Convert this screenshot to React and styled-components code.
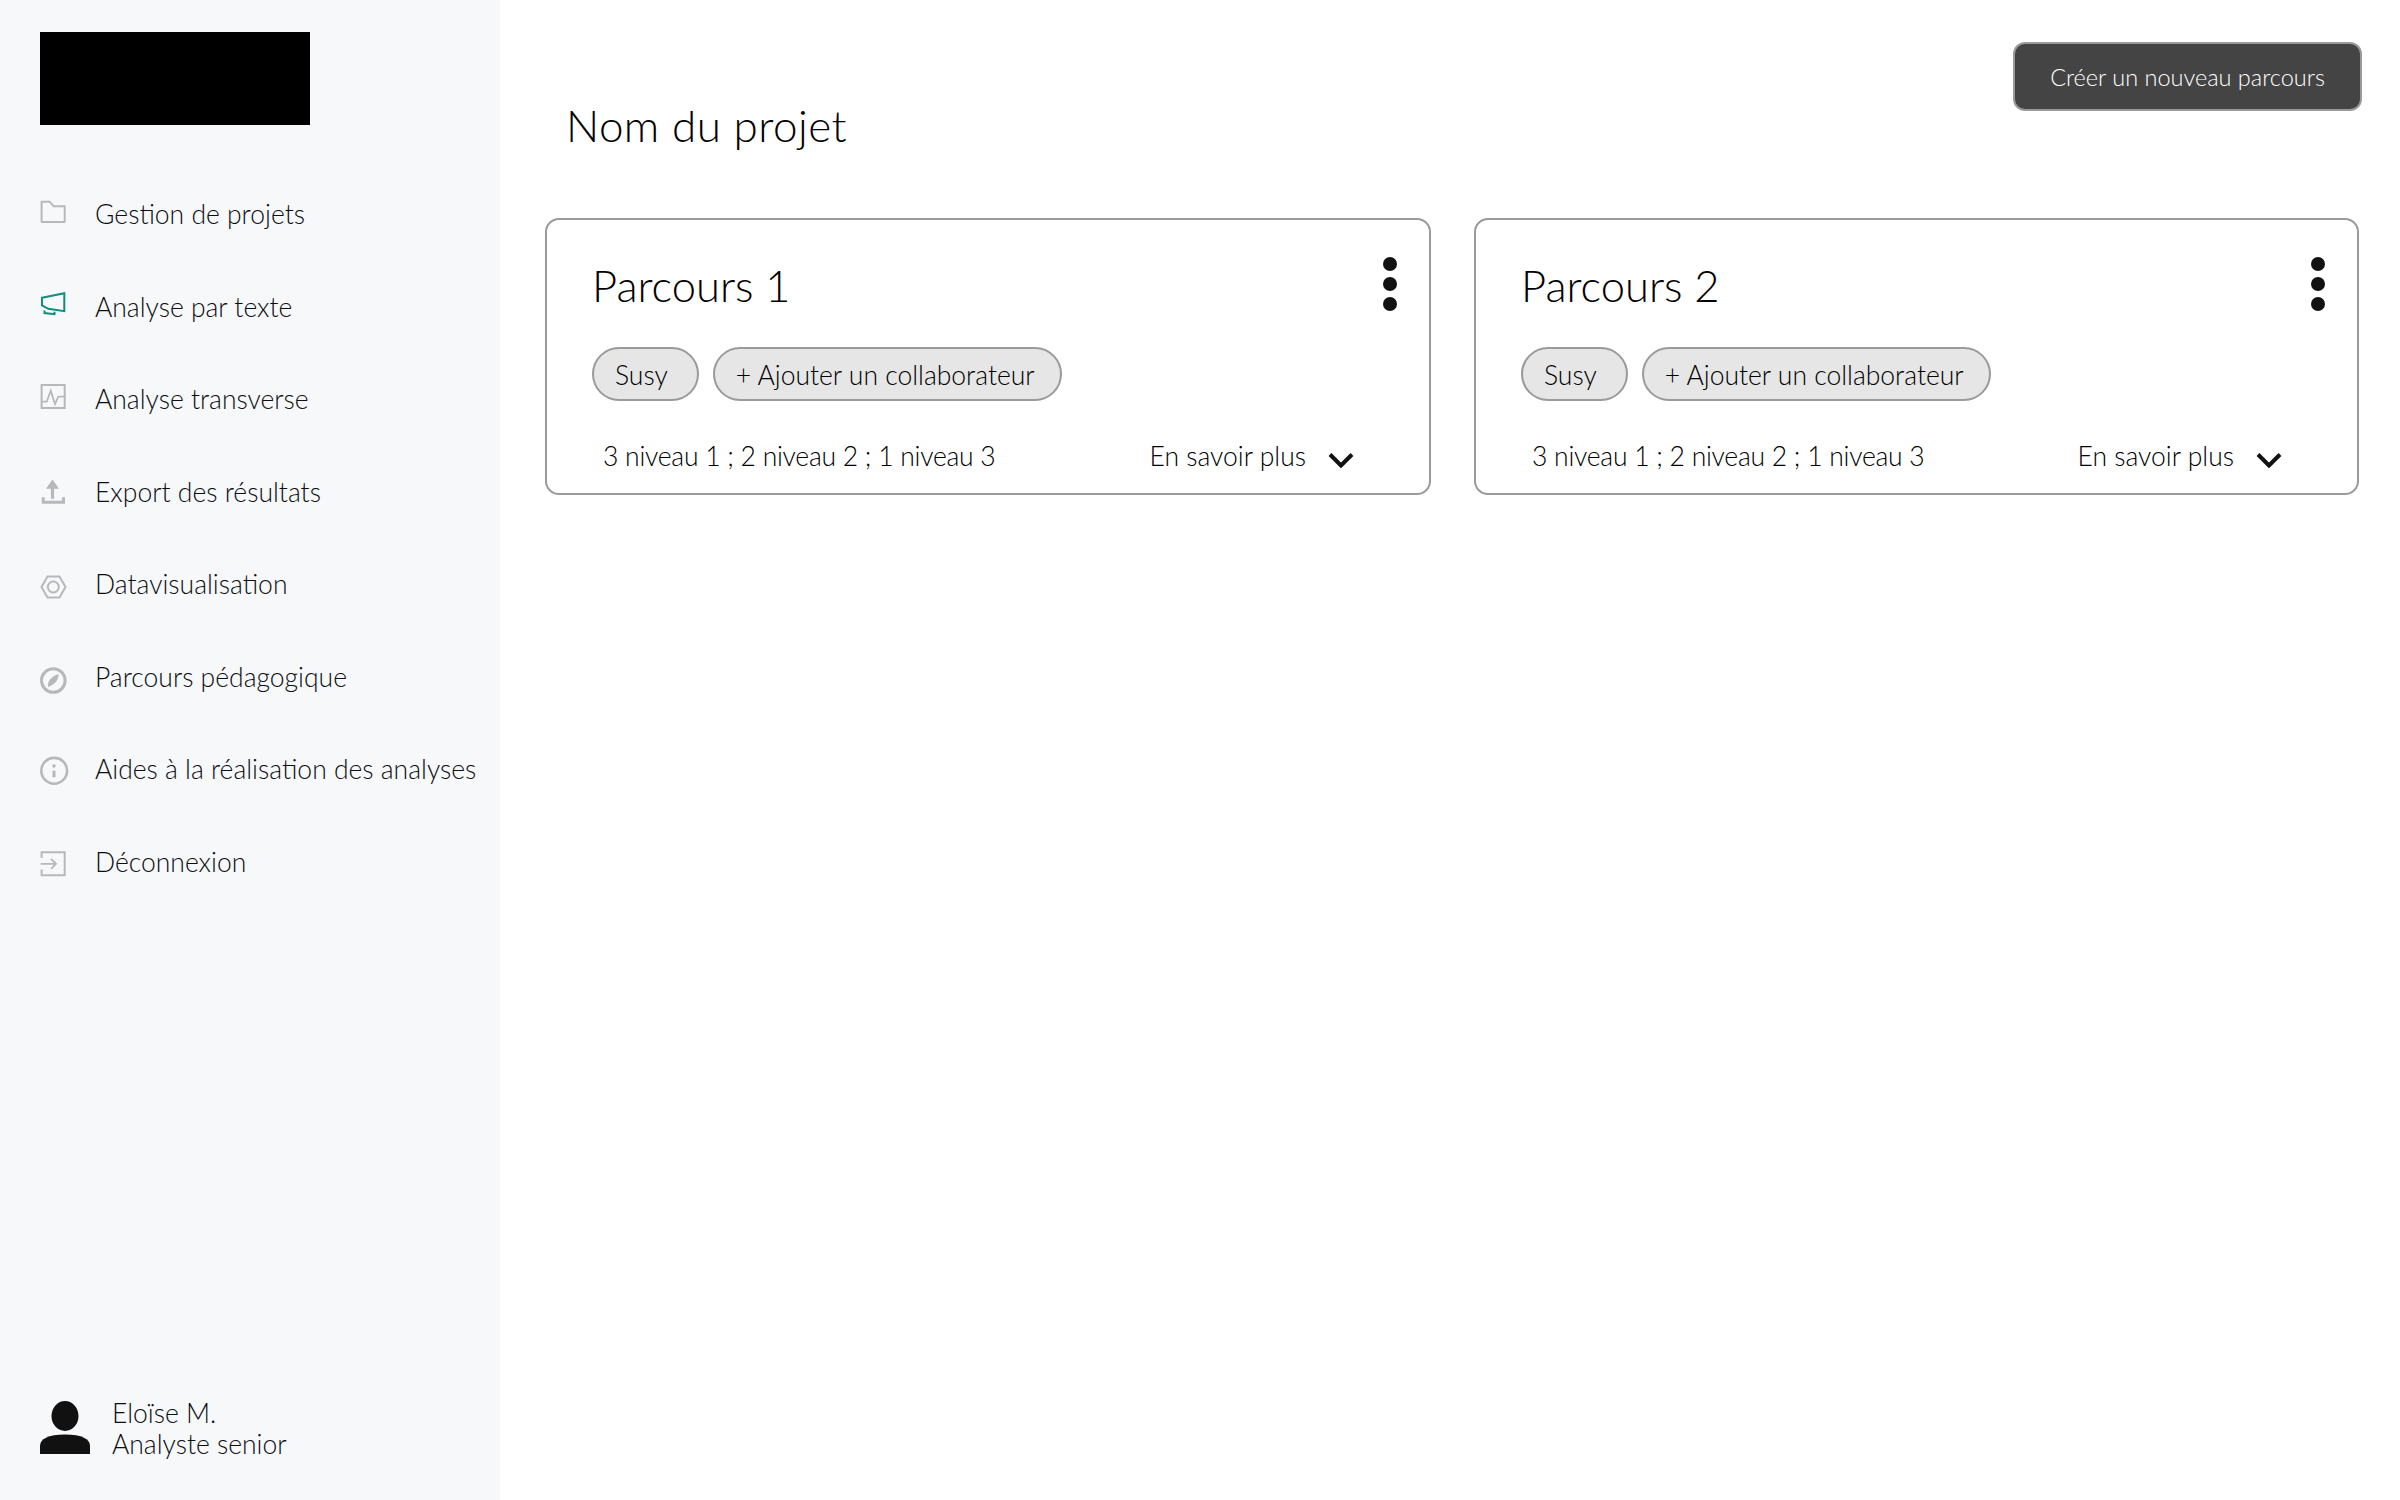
import React from "react";
import styled, { createGlobalStyle } from "styled-components";

const GlobalStyle = createGlobalStyle`
  html, body {
    margin: 0;
    padding: 0;
    background: #ffffff;
  }
  * {
    box-sizing: border-box;
  }
  body {
    font-family: "Lato", "Open Sans", sans-serif;
    color: #16181d;
  }
`;

const Page = styled.div`
  display: flex;
  width: 2400px;
  height: 1500px;
  overflow: hidden;
`;

const Sidebar = styled.aside`
  display: flex;
  flex-direction: column;
  flex: 0 0 500px;
  height: 100%;
  padding: 32px 0 40px 40px;
  background: #f7f8fa;
`;

const Logo = styled.div`
  width: 270px;
  height: 93px;
  background: #000000;
`;

const Nav = styled.nav`
  display: flex;
  flex-direction: column;
  margin-top: 43px;
`;

const NavItem = styled.a`
  display: flex;
  align-items: center;
  height: 92.5px;
  font-size: 26.5px;
  font-weight: 300;
  color: #0c0e12;
  white-space: nowrap;
`;

const NavIcon = styled.svg`
  flex: 0 0 30px;
  width: 30px;
  height: 30px;
  margin-right: 25px;
  overflow: visible;
  color: ${(p) => (p.$active ? "#0d8f7d" : "#b7b8bc")};
`;

const UserBlock = styled.div`
  display: flex;
  align-items: flex-start;
  margin-top: auto;
`;

const Avatar = styled.svg`
  width: 50px;
  height: 54px;
  margin: 3px 22px 0 0;
  color: #111111;
`;

const UserText = styled.div`
  font-size: 26.5px;
  font-weight: 300;
  line-height: 31px;
  color: #0c0e12;
`;

const Main = styled.main`
  flex: 1;
  padding: 42px 38px 0 45px;
`;

const Header = styled.header`
  display: flex;
  justify-content: space-between;
  align-items: flex-start;
  height: 176px;
`;

const Title = styled.h1`
  margin: 54px 0 0 21px;
  font-size: 44px;
  line-height: 58px;
  font-weight: 300;
  letter-spacing: 0.4px;
  color: #000000;
`;

const PrimaryButton = styled.button`
  width: 349px;
  height: 69px;
  border: 2px solid #9a9a9a;
  border-radius: 12px;
  background: #444444;
  color: #ffffff;
  font-family: inherit;
  font-size: 23.5px;
  font-weight: 300;
`;

const CardRow = styled.div`
  display: grid;
  grid-template-columns: 886px 885px;
  gap: 43px;
`;

const Card = styled.article`
  display: flex;
  flex-direction: column;
  height: 277px;
  padding: 0 32px 0 45px;
  border: 2px solid #9a9a9a;
  border-radius: 14px;
  background: #ffffff;
`;

const CardTop = styled.div`
  display: flex;
  justify-content: space-between;
  height: 126.5px;
  padding-top: 36px;
`;

const CardTitle = styled.h2`
  margin: 0;
  font-size: 43.5px;
  line-height: 58px;
  font-weight: 300;
  color: #000000;
`;

const Dots = styled.div`
  display: flex;
  flex-direction: column;
  gap: 6px;
  margin-top: 1px;
`;

const Dot = styled.span`
  width: 14px;
  height: 14px;
  border-radius: 50%;
  background: #111111;
`;

const Pills = styled.div`
  display: flex;
  gap: 14px;
`;

const Pill = styled.span`
  display: flex;
  align-items: center;
  height: 54px;
  padding: 2px ${(p) => p.$right || 25}px 0 21px;
  border: 2px solid #9a9a9a;
  border-radius: 27px;
  background: #e6e6e6;
  font-size: 26.5px;
  font-weight: 300;
  color: #000000;
`;

const CardFooter = styled.div`
  display: flex;
  justify-content: space-between;
  align-items: center;
  margin-top: 39.5px;
  padding: 0 43px 0 11px;
  font-size: 26.5px;
  font-weight: 300;
  color: #000000;
`;

const Levels = styled.span`
  letter-spacing: -0.25px;
`;

const More = styled.span`
  display: flex;
  align-items: center;
  gap: 22px;
`;

const Chevron = styled.svg`
  width: 26px;
  height: 16px;
  margin-top: 8px;
  color: #111111;
`;

const iconProps = {
  viewBox: "0 0 30 30",
  fill: "none",
  stroke: "currentColor",
  strokeWidth: 2,
};

const navItems = [
  {
    label: "Gestion de projets",
    icon: <path d="M1.600 2.700h8l4 4.500h11.100v15.300a.5.5 0 0 1-.5.5H2.100a.5.5 0 0 1-.5-.5z" />,
  },
  {
    label: "Analyse par texte",
    active: true,
    icon: (
      <>
        <path d="M2 5.800L24.300 1.200V19.200L8.300 16.800 2 13.500z" />
        <path d="M4.500 18.500v2.500l10 1.200v-2.500" />
      </>
    ),
  },
  {
    label: "Analyse transverse",
    icon: (
      <>
        <rect x="1.600" y="1" width="23.100" height="23" />
        <path d="M1 17.700h5.700l4-11 4.300 13.300 3.300-7.300h7.400" strokeWidth="1.800" />
      </>
    ),
  },
  {
    label: "Export des résultats",
    icon: (
      <>
        <path d="M12.500 2.500L19 11.800H6z" fill="currentColor" stroke="none" />
        <path d="M12.500 10v11.800" strokeWidth="3.200" />
        <path d="M3.200 20.200v5.100h20.300v-5.100" strokeWidth="3" />
      </>
    ),
  },
  {
    label: "Datavisualisation",
    icon: (
      <>
        <path d="M7.500 7.500h12l6 10.500-6 10.500h-12L1.500 18z" />
        <circle cx="13.300" cy="18" r="5.500" />
      </>
    ),
  },
  {
    label: "Parcours pédagogique",
    icon: (
      <>
        <circle cx="13.300" cy="18.500" r="11.800" strokeWidth="3" />
        <path d="M18.500 12C19 18 14 23 8 25 7 19 12 14 18.500 12z" fill="currentColor" stroke="none" />
      </>
    ),
  },
  {
    label: "Aides à la réalisation des analyses",
    icon: (
      <>
        <circle cx="14.200" cy="16.800" r="12.900" strokeWidth="2.600" />
        <path d="M14 16.700v6.600" strokeWidth="3" />
        <circle cx="14" cy="12" r="1.700" fill="currentColor" stroke="none" />
      </>
    ),
  },
  {
    label: "Déconnexion",
    icon: (
      <>
        <path d="M1.600 11V5.200h23.100v23H1.600v-5.700" />
        <path d="M.6 16.800H16M11 11.800l5 5-5 5" strokeWidth="1.800" />
      </>
    ),
  },
];

const parcours = ["Parcours 1", "Parcours 2"];

function App() {
  return (
    <Page>
      <GlobalStyle />
      <Sidebar>
        <Logo />
        <Nav>
          {navItems.map((item) => (
            <NavItem key={item.label}>
              <NavIcon {...iconProps} $active={item.active}>
                {item.icon}
              </NavIcon>
              {item.label}
            </NavItem>
          ))}
        </Nav>
        <UserBlock>
          <Avatar viewBox="0 0 50 54" fill="currentColor">
            <ellipse cx="25" cy="15" rx="13.500" ry="15" />
            <path d="M0 53V45C0 38 8 33.500 25 33.500S50 38 50 45V53z" />
          </Avatar>
          <UserText>
            Eloïse M.
            <br />
            Analyste senior
          </UserText>
        </UserBlock>
      </Sidebar>
      <Main>
        <Header>
          <Title>Nom du projet</Title>
          <PrimaryButton>Créer un nouveau parcours</PrimaryButton>
        </Header>
        <CardRow>
          {parcours.map((name) => (
            <Card key={name}>
              <CardTop>
                <CardTitle>{name}</CardTitle>
                <Dots>
                  <Dot />
                  <Dot />
                  <Dot />
                </Dots>
              </CardTop>
              <Pills>
                <Pill $right={29}>Susy</Pill>
                <Pill>+ Ajouter un collaborateur</Pill>
              </Pills>
              <CardFooter>
                <Levels>3 niveau 1 ; 2 niveau 2 ; 1 niveau 3</Levels>
                <More>
                  En savoir plus
                  <Chevron viewBox="0 0 26 16" fill="none" stroke="currentColor" strokeWidth="4">
                    <path d="M2 2.500l11 11 11-11" />
                  </Chevron>
                </More>
              </CardFooter>
            </Card>
          ))}
        </CardRow>
      </Main>
    </Page>
  );
}

export default App;
